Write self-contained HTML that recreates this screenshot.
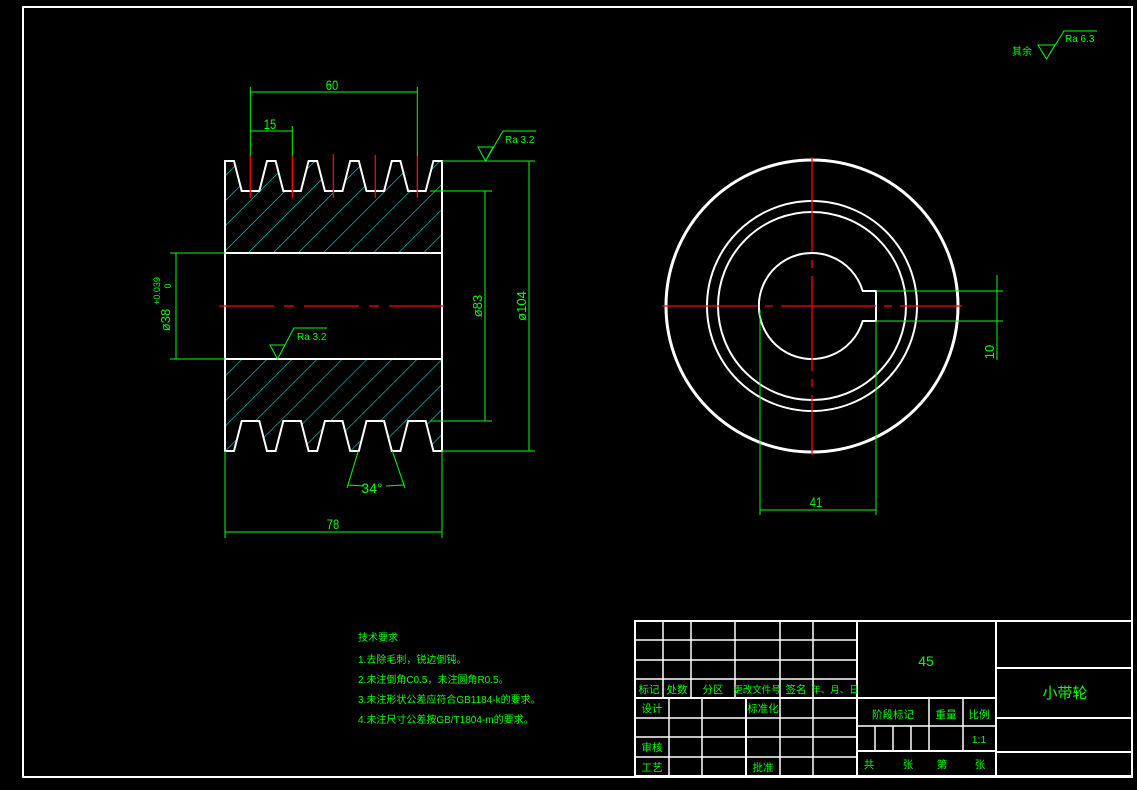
<!DOCTYPE html>
<html><head><meta charset="utf-8"><style>
html,body{margin:0;padding:0;background:#000;}
svg{display:block}
text{font-family:"Liberation Sans","Noto Sans CJK SC",sans-serif;fill:#00ff00}
</style></head><body>
<svg width="1137" height="790" viewBox="0 0 1137 790" xmlns="http://www.w3.org/2000/svg">
<defs>
<pattern id="h" width="17.7" height="17.7" patternUnits="userSpaceOnUse" patternTransform="rotate(45)">
<line x1="0" y1="0" x2="0" y2="17.7" stroke="#00e0e0" stroke-width="1.2"/>
</pattern>
</defs>
<rect width="1137" height="790" fill="#000"/>
<rect x="23" y="7" width="1109" height="770" fill="none" stroke="#fff" stroke-width="2"/>

<path d="M225,253 L225,161 L234,161 L241.7,191 L259.3,191 L267,161 L275.6,161 L283.3,191 L300.9,191 L308.6,161 L317.2,161 L324.9,191 L342.5,191 L350.2,161 L358.8,161 L366.5,191 L384.1,191 L391.8,161 L400.4,161 L408.1,191 L425.7,191 L433.4,161 L442,161 L442,253 Z" fill="url(#h)" stroke="#fff" stroke-width="2"/>
<path d="M225,359 L225,451 L234,451 L241.7,421 L259.3,421 L267,451 L275.6,451 L283.3,421 L300.9,421 L308.6,451 L317.2,451 L324.9,421 L342.5,421 L350.2,451 L358.8,451 L366.5,421 L384.1,421 L391.8,451 L400.4,451 L408.1,421 L425.7,421 L433.4,451 L442,451 L442,359 Z" fill="url(#h)" stroke="#fff" stroke-width="2"/>
<line x1="225" y1="253" x2="225" y2="359" stroke="#fff" stroke-width="2"/>
<line x1="442" y1="253" x2="442" y2="359" stroke="#fff" stroke-width="2"/>
<line x1="219" y1="306" x2="447" y2="306" stroke="#f00" stroke-width="1.3" stroke-dasharray="55,10,10,10"/>
<g stroke="#f00" stroke-width="1.3">
<line x1="250.3" y1="156" x2="250.3" y2="198"/><line x1="292.3" y1="156" x2="292.3" y2="198"/><line x1="333.3" y1="154" x2="333.3" y2="198"/><line x1="375.3" y1="155" x2="375.3" y2="198"/><line x1="417.3" y1="156" x2="417.3" y2="198"/>
</g>
<g stroke="#00ff00" stroke-width="1" fill="none">
<line x1="250.3" y1="87" x2="250.3" y2="156"/><line x1="417.3" y1="87" x2="417.3" y2="156"/><line x1="250" y1="92" x2="417" y2="92"/>
<line x1="292.3" y1="126" x2="292.3" y2="156"/><line x1="250" y1="131" x2="292" y2="131"/>
<line x1="442" y1="161" x2="535" y2="161"/><line x1="442" y1="451" x2="535" y2="451"/><line x1="529" y1="161" x2="529" y2="451"/>
<line x1="430" y1="191" x2="492" y2="191"/><line x1="430" y1="421" x2="492" y2="421"/><line x1="485" y1="191" x2="485" y2="421"/>
<line x1="170" y1="253" x2="225" y2="253"/><line x1="170" y1="359" x2="225" y2="359"/><line x1="176" y1="253" x2="176" y2="359"/>
<line x1="225" y1="451" x2="225" y2="538"/><line x1="442" y1="451" x2="442" y2="538"/><line x1="225" y1="532" x2="442" y2="532"/>
<line x1="358.3" y1="451" x2="347" y2="488"/><line x1="392.3" y1="451" x2="405" y2="488"/>
<path d="M348,485 L364,486 M386,486 L404,485"/>
<path d="M478,147 L493,147 L485.5,161 Z M485.5,161 L503,131 L536,131"/>
<path d="M270,345 L285,345 L277.5,359 Z M277.5,359 L294,328 L327,328"/>
<path d="M1038,45 L1055,45 L1046.5,59 Z M1046.5,59 L1064,31 L1097,31"/>
</g>
<text x="332" y="90" font-size="14" text-anchor="middle" transform="translate(332 0) scale(0.8 1) translate(-332 0)">60</text>
<text x="270" y="129" font-size="14" text-anchor="middle" transform="translate(270 0) scale(0.8 1) translate(-270 0)">15</text>
<text x="333" y="529" font-size="14" text-anchor="middle" transform="translate(333 0) scale(0.8 1) translate(-333 0)">78</text>
<text x="372" y="493" font-size="14" text-anchor="middle">34°</text>
<text transform="translate(526 306) rotate(-90)" font-size="13" text-anchor="middle">ø104</text>
<text transform="translate(482 306) rotate(-90)" font-size="13" text-anchor="middle">ø83</text>
<text transform="translate(170 320) rotate(-90)" font-size="13" text-anchor="middle">ø38</text>
<text transform="translate(160 291) rotate(-90)" font-size="9" text-anchor="middle">+0.039</text>
<text transform="translate(171 286) rotate(-90)" font-size="9" text-anchor="middle">0</text>
<text x="505" y="143" font-size="10">Ra 3.2</text>
<text x="297" y="340" font-size="10">Ra 3.2</text>
<text x="1065" y="42" font-size="10">Ra 6.3</text>
<text x="1012" y="55" font-size="10">其余</text>

<circle cx="812" cy="306" r="146" fill="none" stroke="#fff" stroke-width="3"/>
<circle cx="812" cy="306" r="105" fill="none" stroke="#fff" stroke-width="2"/>
<circle cx="812" cy="306" r="94" fill="none" stroke="#fff" stroke-width="2"/>
<path d="M862.7,291 A53,53 0 1 0 862.7,321 L876,321 L876,291 Z" fill="none" stroke="#fff" stroke-width="2"/>
<line x1="662" y1="306" x2="962" y2="306" stroke="#f00" stroke-width="1.3" stroke-dasharray="95,8,8,8"/>
<line x1="812" y1="157" x2="812" y2="455" stroke="#f00" stroke-width="1.3" stroke-dasharray="95,8,8,8"/>
<g stroke="#00ff00" stroke-width="1">
<line x1="760" y1="310" x2="760" y2="515"/><line x1="876" y1="321" x2="876" y2="515"/><line x1="760" y1="510" x2="876" y2="510"/>
<line x1="876" y1="291" x2="1003" y2="291"/><line x1="876" y1="321" x2="1003" y2="321"/><line x1="997" y1="275" x2="997" y2="360"/>
</g>
<text x="816" y="507" font-size="14" text-anchor="middle" transform="translate(816 0) scale(0.8 1) translate(-816 0)">41</text>
<text transform="translate(994 352) rotate(-90)" font-size="13" text-anchor="middle">10</text>

<g font-size="10">
<text x="358" y="641">技术要求</text>
<text x="358" y="663">1.去除毛刺，锐边倒钝。</text>
<text x="358" y="683">2.未注倒角C0.5，未注圆角R0.5。</text>
<text x="358" y="703">3.未注形状公差应符合GB1184-k的要求。</text>
<text x="358" y="723">4.未注尺寸公差按GB/T1804-m的要求。</text>
</g>

<g stroke="#fff" stroke-width="1.5" fill="none">
<rect x="635" y="621" width="497" height="155" stroke-width="2"/>
<line x1="635" y1="640" x2="857" y2="640"/><line x1="635" y1="660" x2="857" y2="660"/><line x1="635" y1="679" x2="857" y2="679"/><line x1="635" y1="698" x2="857" y2="698" stroke-width="2"/>
<line x1="663" y1="621" x2="663" y2="698"/><line x1="691" y1="621" x2="691" y2="698"/><line x1="735" y1="621" x2="735" y2="698"/><line x1="780" y1="621" x2="780" y2="776"/><line x1="813" y1="621" x2="813" y2="776"/>
<line x1="635" y1="718" x2="857" y2="718"/><line x1="635" y1="737" x2="857" y2="737"/><line x1="635" y1="757" x2="857" y2="757"/>
<line x1="669" y1="698" x2="669" y2="776"/><line x1="702" y1="698" x2="702" y2="776"/><line x1="746" y1="698" x2="746" y2="776" stroke-width="2"/>
<line x1="857" y1="621" x2="857" y2="776" stroke-width="2"/><line x1="996" y1="621" x2="996" y2="776" stroke-width="2"/>
<line x1="857" y1="698" x2="996" y2="698" stroke-width="2"/><line x1="857" y1="726" x2="996" y2="726"/><line x1="857" y1="751" x2="996" y2="751" stroke-width="2"/>
<line x1="929" y1="698" x2="929" y2="751"/><line x1="963" y1="698" x2="963" y2="751"/>
<line x1="875" y1="726" x2="875" y2="751"/><line x1="893" y1="726" x2="893" y2="751"/><line x1="911" y1="726" x2="911" y2="751"/>
<line x1="996" y1="668" x2="1132" y2="668" stroke-width="2"/><line x1="996" y1="718" x2="1132" y2="718" stroke-width="2"/><line x1="996" y1="752" x2="1132" y2="752" stroke-width="2"/>
</g>
<g font-size="10.5" text-anchor="middle">
<text x="649" y="693">标记</text><text x="677" y="693">处数</text><text x="713" y="693">分区</text><text x="757" y="693" font-size="9.5">更改文件号</text><text x="796" y="693">签名</text><text x="835" y="693" font-size="9.5">年、月、日</text>
<text x="652" y="712">设计</text><text x="763" y="712">标准化</text>
<text x="652" y="751">审核</text><text x="652" y="771">工艺</text><text x="763" y="771">批准</text>
<text x="893" y="718">阶段标记</text><text x="946" y="718">重量</text><text x="979" y="718">比例</text>
<text x="979" y="743">1:1</text>
<text x="869" y="768">共</text><text x="908" y="768">张</text><text x="942" y="768">第</text><text x="980" y="768">张</text>
</g>
<text x="926" y="666" font-size="14" text-anchor="middle">45</text>
<text x="1065" y="698" font-size="15" text-anchor="middle">小带轮</text>
</svg>
</body></html>
